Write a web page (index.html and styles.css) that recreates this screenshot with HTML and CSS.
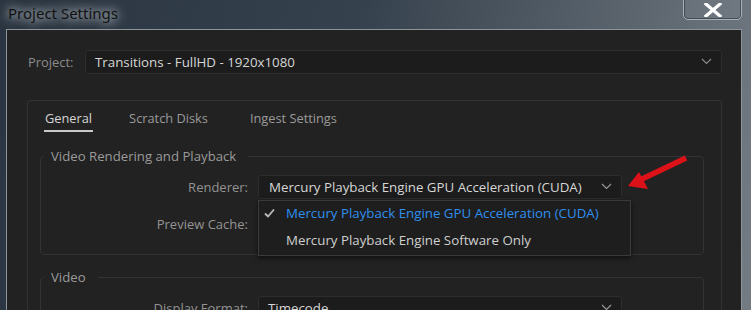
FILE: index.html
```html
<!DOCTYPE html>
<html lang="en">
<head>
<meta charset="UTF-8" />
<title>Project Settings</title>
<link rel="stylesheet" href="styles.css">
</head>
<body>
<div class="window">

  <!-- Title bar -->
  <div class="titlebar">
    <span class="title">Project Settings</span>
    <button class="close" aria-label="Close">
      <svg width="18" height="14" viewBox="0 0 18 14"><path d="M2 1 L16 13 M16 1 L2 13" stroke="#fff" stroke-width="3.2" stroke-linecap="square"/></svg>
    </button>
  </div>

  <!-- Dialog body -->
  <div class="dialog">
    <div class="project-row">
      <label>Project:</label>
      <div class="select">
        <span>Transitions - FullHD - 1920x1080</span>
        <svg class="chev" width="11" height="7" viewBox="0 0 11 7"><path d="M1 1 L5.5 5.5 L10 1" fill="none" stroke="#8c8c8c" stroke-width="1.1"/></svg>
      </div>
    </div>

    <div class="panel">
      <div class="tabs">
        <span class="tab active">General</span>
        <span class="tab">Scratch Disks</span>
        <span class="tab">Ingest Settings</span>
      </div>

      <fieldset class="group">
        <legend>Video Rendering and Playback</legend>
        <div class="row">
          <label>Renderer:</label>
          <div class="select-wrap">
            <div class="select">
              <span>Mercury Playback Engine GPU Acceleration (CUDA)</span>
              <svg class="chev" width="11" height="7" viewBox="0 0 11 7"><path d="M1 1 L5.5 5.5 L10 1" fill="none" stroke="#9a9a9a" stroke-width="1.1"/></svg>
            </div>
            <ul class="menu">
              <li class="checked">
                <svg class="check" width="11" height="10" viewBox="0 0 11 10"><path d="M1 5.5 L4 8.5 L10 1.5" fill="none" stroke="#bdbdbd" stroke-width="1.8"/></svg>
                Mercury Playback Engine GPU Acceleration (CUDA)
              </li>
              <li>Mercury Playback Engine Software Only</li>
            </ul>
          </div>
        </div>
        <div class="row">
          <label>Preview Cache:</label>
          <div class="select"></div>
        </div>
      </fieldset>

      <fieldset class="group">
        <legend>Video</legend>
        <div class="row">
          <label>Display Format:</label>
          <div class="select">
            <span>Timecode</span>
            <svg class="chev" width="11" height="7" viewBox="0 0 11 7"><path d="M1 1 L5.5 5.5 L10 1" fill="none" stroke="#9a9a9a" stroke-width="1.1"/></svg>
          </div>
        </div>
      </fieldset>
    </div>
  </div>

  <!-- Red annotation arrow -->
  <svg class="arrow" width="80" height="50" viewBox="620 150 80 50">
    <line x1="686" y1="158" x2="640" y2="180" stroke="#dd1218" stroke-width="5.5"/>
    <polygon points="628,186 639,172 648,189" fill="#dd1218"/>
  </svg>
</div>
</body>
</html>
```

FILE: styles.css
```css
/* Reset and basics */
* {margin:0; padding:0; box-sizing:border-box;}
html, body {
  width: 751px;
  height: 310px;
  overflow: hidden;
}
body {
  font-family: 'Open Sans', 'Noto Sans', sans-serif;
  font-size: 13.3px;
  color: #d2d2d2;
  background: linear-gradient(100deg, #2a3541 0%, #35414d 45%, #5d666f 80%, #737b83 100%);
}

.window {
  position: relative;
  height: 310px;
}

/* Title bar */
.titlebar {
  height: 29px;
  display: flex;
  align-items: flex-start;
}
.title {
  margin-left: 8px;
  margin-top: 2px;
  font-family: 'Noto Sans', sans-serif;
  font-size: 15px;
  line-height: 22px;
  color: #111;
  text-shadow: 0 0 8px rgba(230,236,240,0.9), 0 0 14px rgba(230,236,240,0.7);
}
.close {
  margin-left: auto;
  margin-right: 9px;
  margin-top: -3px;
  width: 59px;
  height: 23px;
  border: 1px solid #a9b0b6;
  border-radius: 0 0 5px 5px;
  background: rgba(255,255,255,0.04);
  box-shadow: inset 0 0 0 1px rgba(40,50,60,0.6);
  display: flex;
  align-items: center;
  justify-content: center;
  padding-top: 3px;
}

/* Dialog body */
.dialog {
  margin-left: 6px;
  width: 736px;
  height: 300px;
  background: #222;
  border: 1px solid #8d949a;
  border-bottom: none;
  padding: 20px 19px 0 20px;
}

.project-row {
  display: flex;
  align-items: center;
}
.project-row label {
  width: 58px;
  padding-left: 1px;
  font-size: 12.9px;
  color: #8c8c8c;
}

/* Dropdown boxes */
.select {
  flex: 1;
  height: 24px;
  background: #1c1c1c;
  border: 1px solid #2d2d2d;
  border-radius: 3px;
  display: flex;
  align-items: center;
  padding: 0 9px 1px;
  color: #d6d6d6;
}
.select .chev {
  margin-left: auto;
}

/* Tab panel */
.panel {
  margin-top: 26px;
  height: 240px;
  border: 1px solid #333;
  border-bottom: none;
  border-radius: 4px 4px 0 0;
  padding: 8px 17px 0 12px;
}
.tabs {
  display: flex;
  gap: 35px;
  padding-left: 4px;
}
.tab {
  line-height: 18px;
  font-size: 12.8px;
  padding: 0 1px 3px;
  color: #9a9a9a;
  border-bottom: 2px solid transparent;
}
.tab.active {
  color: #d6d6d6;
  border-bottom-color: #c9c9c9;
}
.tab + .tab + .tab {
  margin-left: 5px;
}

/* Groups */
.group {
  margin-top: 15px;
  border: 1px solid #333;
  border-radius: 4px;
  padding: 10px 0 18px 3px;
}
.group + .group {
  margin-top: 13px;
}
.group legend {
  padding: 0 12px 0 7px;
  line-height: 18px;
  font-size: 13.2px;
  color: #9a9a9a;
}
.row {
  display: grid;
  grid-template-columns: 204px 364px;
  column-gap: 10px;
  align-items: center;
}
.row + .row {
  margin-top: 13px;
}
.row label {
  text-align: right;
  font-size: 13px;
  color: #939393;
}
.select-wrap {
  position: relative;
  display: flex;
}
.select-wrap .select {
  padding-left: 10px;
}

/* Open dropdown menu */
.menu {
  position: absolute;
  left: 0;
  top: 25px;
  width: 373px;
  list-style: none;
  background: #1e1e1e;
  border: 1px solid #3a3a3a;
  box-shadow: 0 2px 5px rgba(0,0,0,0.6);
  z-index: 10;
}
.menu li {
  height: 28px;
  display: flex;
  align-items: center;
  padding: 0 0 3px 27px;
  position: relative;
  color: #cfcfcf;
}
.menu li:first-child {
  height: 26px;
  padding-bottom: 2px;
}
.menu li.checked {
  color: #2f8fee;
}
.menu .check {
  position: absolute;
  left: 5px;
  top: 7px;
}

/* Annotation */
.arrow {
  position: absolute;
  left: 620px;
  top: 150px;
  z-index: 20;
}
```
